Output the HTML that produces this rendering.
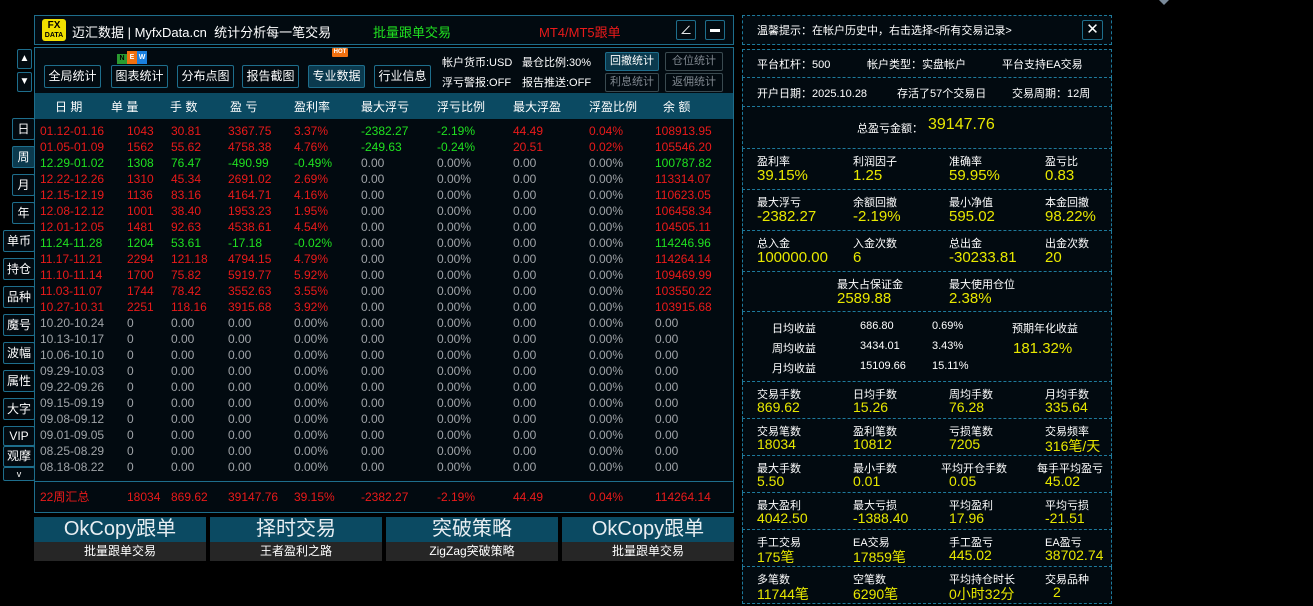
<!DOCTYPE html>
<html><head><meta charset="utf-8"><style>
*{margin:0;padding:0;box-sizing:border-box}
body{width:1313px;height:606px;background:#000;overflow:hidden;position:relative;font-family:"Liberation Sans","Noto Sans CJK SC",sans-serif;color:#fff;font-size:12px}
.a{position:absolute;white-space:nowrap}
.btn{position:absolute;border:1px solid #1e6e8c;border-radius:2px;background:#020a10;color:#fff;text-align:center;font-size:12px}
.r{color:#ea1a1a}.g{color:#20e020}.y{color:#e8e800}.gr{color:#a0a4a8}
.row{position:absolute;left:40px;height:16px;font-size:12px;line-height:16px;width:690px}
.row span{position:absolute;top:0}
.c1{left:0}.c2{left:87px}.c3{left:131px}.c4{left:188px}.c5{left:254px}.c6{left:321px}.c7{left:397px}.c8{left:473px}.c9{left:549px}.c10{left:615px}
.sec{position:absolute;left:742px;width:370px;border-left:1px dashed #1e7a9c;border-right:1px dashed #1e7a9c;border-bottom:1px dashed #1e7a9c;background:#020a10}
.lb{position:absolute;font-size:11px;color:#fff;white-space:nowrap}
.vl{position:absolute;font-size:15px;color:#e8e800;white-space:nowrap}
</style></head><body>
<div class="a" style="left:1159px;top:0;width:0;height:0;border-left:5px solid transparent;border-right:5px solid transparent;border-top:5px solid #7a8a9a"></div>

<!-- main panel -->
<div class="a" style="left:34px;top:15px;width:700px;height:30px;border:1px solid #1e6e8c;background:#020a10"></div>
<div class="a" style="left:42px;top:19px;width:24px;height:22px;background:#f0e000;border-radius:3px;color:#000;font-weight:bold;text-align:center;font-size:10px;line-height:9px;padding-top:2px">FX<br><span style="font-size:7px">DATA</span></div>
<div class="a" style="left:72px;top:22px;font-size:13px">迈汇数据 | MyfxData.cn &nbsp;统计分析每一笔交易</div>
<div class="a g" style="left:373px;top:22px;font-size:13px">批量跟单交易</div>
<div class="a r" style="left:539px;top:22px;font-size:13px">MT4/MT5跟单</div>
<div class="btn" style="left:676px;top:20px;width:20px;height:20px;line-height:18px">∠</div>
<div class="btn" style="left:705px;top:20px;width:20px;height:20px"><div style="margin:8px auto 0;width:10px;height:3px;background:#fff"></div></div>

<div class="a" style="left:34px;top:47px;width:700px;height:466px;border:1px solid #1e6e8c;background:#020a10"></div>
<div class="btn" style="left:44px;top:65px;width:57px;height:23px;line-height:21px">全局统计</div>
<div class="btn" style="left:111px;top:65px;width:57px;height:23px;line-height:21px">图表统计</div>
<div class="btn" style="left:177px;top:65px;width:57px;height:23px;line-height:21px">分布点图</div>
<div class="btn" style="left:242px;top:65px;width:57px;height:23px;line-height:21px">报告截图</div>
<div class="btn" style="left:308px;top:65px;width:57px;height:23px;line-height:21px;background:#0b3a4e">专业数据</div>
<div class="btn" style="left:374px;top:65px;width:57px;height:23px;line-height:21px">行业信息</div>
<div class="a" style="left:117px;top:54px;width:10px;height:10px;background:#2a9a30;font-size:7px;text-align:center;line-height:10px;font-weight:bold;color:#000">N</div>
<div class="a" style="left:127px;top:51px;width:10px;height:13px;background:#f07010;font-size:7px;text-align:center;line-height:13px;font-weight:bold">E</div>
<div class="a" style="left:137px;top:51px;width:10px;height:13px;background:#1a80e0;font-size:7px;text-align:center;line-height:13px;font-weight:bold">W</div>
<div class="a" style="left:332px;top:48px;width:16px;height:9px;background:#f07010;font-size:6px;text-align:center;line-height:9px;font-weight:bold;border-radius:1px">HOT</div>
<div class="a" style="left:442px;top:54px;font-size:11px">帐户货币:USD</div>
<div class="a" style="left:522px;top:54px;font-size:11px">最仓比例:30%</div>
<div class="a" style="left:442px;top:74px;font-size:11px">浮亏警报:OFF</div>
<div class="a" style="left:522px;top:74px;font-size:11px">报告推送:OFF</div>
<div class="btn" style="left:605px;top:52px;width:54px;height:19px;line-height:17px;font-size:11px;background:#0b3a4e">回撤统计</div>
<div class="btn" style="left:665px;top:52px;width:58px;height:19px;line-height:17px;font-size:11px;color:#808890;border-color:#3a4a50">仓位统计</div>
<div class="btn" style="left:605px;top:73px;width:54px;height:19px;line-height:17px;font-size:11px;color:#808890;border-color:#3a4a50">利息统计</div>
<div class="btn" style="left:665px;top:73px;width:58px;height:19px;line-height:17px;font-size:11px;color:#808890;border-color:#3a4a50">返佣统计</div>

<div class="a" style="left:35px;top:93px;width:698px;height:26px;background:#0b4a62"></div>
<div class="a" style="left:55px;top:98px;font-size:12px">日 期</div>
<div class="a" style="left:111px;top:98px">单 量</div>
<div class="a" style="left:170px;top:98px">手 数</div>
<div class="a" style="left:230px;top:98px">盈 亏</div>
<div class="a" style="left:294px;top:98px">盈利率</div>
<div class="a" style="left:361px;top:98px">最大浮亏</div>
<div class="a" style="left:437px;top:98px">浮亏比例</div>
<div class="a" style="left:513px;top:98px">最大浮盈</div>
<div class="a" style="left:589px;top:98px">浮盈比例</div>
<div class="a" style="left:663px;top:98px">余 额</div>

<div class="row r" style="top:123px"><span class="c1">01.12-01.16</span><span class="c2">1043</span><span class="c3">30.81</span><span class="c4">3367.75</span><span class="c5">3.37%</span><span class="c6 g">-2382.27</span><span class="c7 g">-2.19%</span><span class="c8">44.49</span><span class="c9">0.04%</span><span class="c10">108913.95</span></div>
<div class="row r" style="top:139px"><span class="c1">01.05-01.09</span><span class="c2">1562</span><span class="c3">55.62</span><span class="c4">4758.38</span><span class="c5">4.76%</span><span class="c6 g">-249.63</span><span class="c7 g">-0.24%</span><span class="c8">20.51</span><span class="c9">0.02%</span><span class="c10">105546.20</span></div>
<div class="row g" style="top:155px"><span class="c1">12.29-01.02</span><span class="c2">1308</span><span class="c3">76.47</span><span class="c4">-490.99</span><span class="c5">-0.49%</span><span class="c6 gr">0.00</span><span class="c7 gr">0.00%</span><span class="c8 gr">0.00</span><span class="c9 gr">0.00%</span><span class="c10">100787.82</span></div>
<div class="row r" style="top:171px"><span class="c1">12.22-12.26</span><span class="c2">1310</span><span class="c3">45.34</span><span class="c4">2691.02</span><span class="c5">2.69%</span><span class="c6 gr">0.00</span><span class="c7 gr">0.00%</span><span class="c8 gr">0.00</span><span class="c9 gr">0.00%</span><span class="c10">113314.07</span></div>
<div class="row r" style="top:187px"><span class="c1">12.15-12.19</span><span class="c2">1136</span><span class="c3">83.16</span><span class="c4">4164.71</span><span class="c5">4.16%</span><span class="c6 gr">0.00</span><span class="c7 gr">0.00%</span><span class="c8 gr">0.00</span><span class="c9 gr">0.00%</span><span class="c10">110623.05</span></div>
<div class="row r" style="top:203px"><span class="c1">12.08-12.12</span><span class="c2">1001</span><span class="c3">38.40</span><span class="c4">1953.23</span><span class="c5">1.95%</span><span class="c6 gr">0.00</span><span class="c7 gr">0.00%</span><span class="c8 gr">0.00</span><span class="c9 gr">0.00%</span><span class="c10">106458.34</span></div>
<div class="row r" style="top:219px"><span class="c1">12.01-12.05</span><span class="c2">1481</span><span class="c3">92.63</span><span class="c4">4538.61</span><span class="c5">4.54%</span><span class="c6 gr">0.00</span><span class="c7 gr">0.00%</span><span class="c8 gr">0.00</span><span class="c9 gr">0.00%</span><span class="c10">104505.11</span></div>
<div class="row g" style="top:235px"><span class="c1">11.24-11.28</span><span class="c2">1204</span><span class="c3">53.61</span><span class="c4">-17.18</span><span class="c5">-0.02%</span><span class="c6 gr">0.00</span><span class="c7 gr">0.00%</span><span class="c8 gr">0.00</span><span class="c9 gr">0.00%</span><span class="c10">114246.96</span></div>
<div class="row r" style="top:251px"><span class="c1">11.17-11.21</span><span class="c2">2294</span><span class="c3">121.18</span><span class="c4">4794.15</span><span class="c5">4.79%</span><span class="c6 gr">0.00</span><span class="c7 gr">0.00%</span><span class="c8 gr">0.00</span><span class="c9 gr">0.00%</span><span class="c10">114264.14</span></div>
<div class="row r" style="top:267px"><span class="c1">11.10-11.14</span><span class="c2">1700</span><span class="c3">75.82</span><span class="c4">5919.77</span><span class="c5">5.92%</span><span class="c6 gr">0.00</span><span class="c7 gr">0.00%</span><span class="c8 gr">0.00</span><span class="c9 gr">0.00%</span><span class="c10">109469.99</span></div>
<div class="row r" style="top:283px"><span class="c1">11.03-11.07</span><span class="c2">1744</span><span class="c3">78.42</span><span class="c4">3552.63</span><span class="c5">3.55%</span><span class="c6 gr">0.00</span><span class="c7 gr">0.00%</span><span class="c8 gr">0.00</span><span class="c9 gr">0.00%</span><span class="c10">103550.22</span></div>
<div class="row r" style="top:299px"><span class="c1">10.27-10.31</span><span class="c2">2251</span><span class="c3">118.16</span><span class="c4">3915.68</span><span class="c5">3.92%</span><span class="c6 gr">0.00</span><span class="c7 gr">0.00%</span><span class="c8 gr">0.00</span><span class="c9 gr">0.00%</span><span class="c10">103915.68</span></div>
<div class="row gr" style="top:315px"><span class="c1">10.20-10.24</span><span class="c2">0</span><span class="c3">0.00</span><span class="c4">0.00</span><span class="c5">0.00%</span><span class="c6">0.00</span><span class="c7">0.00%</span><span class="c8">0.00</span><span class="c9">0.00%</span><span class="c10">0.00</span></div>
<div class="row gr" style="top:331px"><span class="c1">10.13-10.17</span><span class="c2">0</span><span class="c3">0.00</span><span class="c4">0.00</span><span class="c5">0.00%</span><span class="c6">0.00</span><span class="c7">0.00%</span><span class="c8">0.00</span><span class="c9">0.00%</span><span class="c10">0.00</span></div>
<div class="row gr" style="top:347px"><span class="c1">10.06-10.10</span><span class="c2">0</span><span class="c3">0.00</span><span class="c4">0.00</span><span class="c5">0.00%</span><span class="c6">0.00</span><span class="c7">0.00%</span><span class="c8">0.00</span><span class="c9">0.00%</span><span class="c10">0.00</span></div>
<div class="row gr" style="top:363px"><span class="c1">09.29-10.03</span><span class="c2">0</span><span class="c3">0.00</span><span class="c4">0.00</span><span class="c5">0.00%</span><span class="c6">0.00</span><span class="c7">0.00%</span><span class="c8">0.00</span><span class="c9">0.00%</span><span class="c10">0.00</span></div>
<div class="row gr" style="top:379px"><span class="c1">09.22-09.26</span><span class="c2">0</span><span class="c3">0.00</span><span class="c4">0.00</span><span class="c5">0.00%</span><span class="c6">0.00</span><span class="c7">0.00%</span><span class="c8">0.00</span><span class="c9">0.00%</span><span class="c10">0.00</span></div>
<div class="row gr" style="top:395px"><span class="c1">09.15-09.19</span><span class="c2">0</span><span class="c3">0.00</span><span class="c4">0.00</span><span class="c5">0.00%</span><span class="c6">0.00</span><span class="c7">0.00%</span><span class="c8">0.00</span><span class="c9">0.00%</span><span class="c10">0.00</span></div>
<div class="row gr" style="top:411px"><span class="c1">09.08-09.12</span><span class="c2">0</span><span class="c3">0.00</span><span class="c4">0.00</span><span class="c5">0.00%</span><span class="c6">0.00</span><span class="c7">0.00%</span><span class="c8">0.00</span><span class="c9">0.00%</span><span class="c10">0.00</span></div>
<div class="row gr" style="top:427px"><span class="c1">09.01-09.05</span><span class="c2">0</span><span class="c3">0.00</span><span class="c4">0.00</span><span class="c5">0.00%</span><span class="c6">0.00</span><span class="c7">0.00%</span><span class="c8">0.00</span><span class="c9">0.00%</span><span class="c10">0.00</span></div>
<div class="row gr" style="top:443px"><span class="c1">08.25-08.29</span><span class="c2">0</span><span class="c3">0.00</span><span class="c4">0.00</span><span class="c5">0.00%</span><span class="c6">0.00</span><span class="c7">0.00%</span><span class="c8">0.00</span><span class="c9">0.00%</span><span class="c10">0.00</span></div>
<div class="row gr" style="top:459px"><span class="c1">08.18-08.22</span><span class="c2">0</span><span class="c3">0.00</span><span class="c4">0.00</span><span class="c5">0.00%</span><span class="c6">0.00</span><span class="c7">0.00%</span><span class="c8">0.00</span><span class="c9">0.00%</span><span class="c10">0.00</span></div>
<div class="a" style="left:35px;top:481px;width:698px;height:1px;background:#1e6e8c"></div>
<div class="row r" style="top:489px"><span class="c1">22周汇总</span><span class="c2">18034</span><span class="c3">869.62</span><span class="c4">39147.76</span><span class="c5">39.15%</span><span class="c6">-2382.27</span><span class="c7">-2.19%</span><span class="c8">44.49</span><span class="c9">0.04%</span><span class="c10">114264.14</span></div>

<!-- bottom banners -->
<div class="a" style="left:34px;top:517px;width:172px;height:25px;background:#0b4a62;font-size:20px;text-align:center;line-height:25px;color:#e8eef2">OkCopy跟单</div>
<div class="a" style="left:34px;top:542px;width:172px;height:19px;background:#262626;text-align:center;line-height:19px">批量跟单交易</div>
<div class="a" style="left:210px;top:517px;width:172px;height:25px;background:#0b4a62;font-size:20px;text-align:center;line-height:25px;color:#e8eef2">择时交易</div>
<div class="a" style="left:210px;top:542px;width:172px;height:19px;background:#262626;text-align:center;line-height:19px">王者盈利之路</div>
<div class="a" style="left:386px;top:517px;width:172px;height:25px;background:#0b4a62;font-size:20px;text-align:center;line-height:25px;color:#e8eef2">突破策略</div>
<div class="a" style="left:386px;top:542px;width:172px;height:19px;background:#262626;text-align:center;line-height:19px">ZigZag突破策略</div>
<div class="a" style="left:562px;top:517px;width:172px;height:25px;background:#0b4a62;font-size:20px;text-align:center;line-height:25px;color:#e8eef2">OkCopy跟单</div>
<div class="a" style="left:562px;top:542px;width:172px;height:19px;background:#262626;text-align:center;line-height:19px">批量跟单交易</div>

<!-- left sidebar -->
<div class="btn" style="left:17px;top:49px;width:15px;height:20px;line-height:18px;font-size:10px">▲</div>
<div class="btn" style="left:17px;top:72px;width:15px;height:20px;line-height:18px;font-size:10px">▼</div>
<div class="btn" style="left:12px;top:118px;width:23px;height:22px;line-height:20px">日</div>
<div class="btn" style="left:12px;top:146px;width:23px;height:22px;line-height:20px;background:#0b3a4e">周</div>
<div class="btn" style="left:12px;top:174px;width:23px;height:22px;line-height:20px">月</div>
<div class="btn" style="left:12px;top:202px;width:23px;height:22px;line-height:20px">年</div>
<div class="btn" style="left:3px;top:230px;width:32px;height:22px;line-height:20px">单币</div>
<div class="btn" style="left:3px;top:258px;width:32px;height:22px;line-height:20px">持仓</div>
<div class="btn" style="left:3px;top:286px;width:32px;height:22px;line-height:20px">品种</div>
<div class="btn" style="left:3px;top:314px;width:32px;height:22px;line-height:20px">魔号</div>
<div class="btn" style="left:3px;top:342px;width:32px;height:22px;line-height:20px">波幅</div>
<div class="btn" style="left:3px;top:370px;width:32px;height:22px;line-height:20px">属性</div>
<div class="btn" style="left:3px;top:398px;width:32px;height:22px;line-height:20px">大字</div>
<div class="btn" style="left:3px;top:426px;width:32px;height:20px;line-height:18px">VIP</div>
<div class="btn" style="left:3px;top:446px;width:32px;height:21px;line-height:19px">观摩</div>
<div class="btn" style="left:3px;top:467px;width:32px;height:14px;line-height:12px;font-size:9px">v</div>

<!-- right panel -->
<div class="sec" style="top:15px;height:30px;border-top:1px dashed #1e7a9c"></div>
<div class="a" style="left:757px;top:22px;font-size:11px">温馨提示：在帐户历史中，右击选择&lt;所有交易记录&gt;</div>
<div class="btn" style="left:1082px;top:20px;width:21px;height:20px;line-height:18px;font-size:15px">✕</div>
<div class="sec" style="top:49px;height:29px;border-top:1px dashed #1e7a9c"></div>
<div class="lb" style="left:757px;top:56px">平台杠杆：500</div>
<div class="lb" style="left:867px;top:56px">帐户类型：实盘帐户</div>
<div class="lb" style="left:1002px;top:56px">平台支持EA交易</div>
<div class="sec" style="top:78px;height:29px"></div>
<div class="lb" style="left:757px;top:85px">开户日期：2025.10.28</div>
<div class="lb" style="left:897px;top:85px">存活了57个交易日</div>
<div class="lb" style="left:1012px;top:85px">交易周期：12周</div>
<div class="sec" style="top:107px;height:42px"></div>
<div class="lb" style="left:857px;top:120px">总盈亏金额：</div>
<div class="vl" style="left:928px;top:116px;font-size:16px">39147.76</div>

<div class="sec" style="top:149px;height:41px"></div>
<div class="lb" style="left:757px;top:153px">盈利率</div><div class="vl" style="left:757px;top:167px">39.15%</div>
<div class="lb" style="left:853px;top:153px">利润因子</div><div class="vl" style="left:853px;top:167px">1.25</div>
<div class="lb" style="left:949px;top:153px">准确率</div><div class="vl" style="left:949px;top:167px">59.95%</div>
<div class="lb" style="left:1045px;top:153px">盈亏比</div><div class="vl" style="left:1045px;top:167px">0.83</div>
<div class="sec" style="top:190px;height:41px"></div>
<div class="lb" style="left:757px;top:194px">最大浮亏</div><div class="vl" style="left:757px;top:208px">-2382.27</div>
<div class="lb" style="left:853px;top:194px">余额回撤</div><div class="vl" style="left:853px;top:208px">-2.19%</div>
<div class="lb" style="left:949px;top:194px">最小净值</div><div class="vl" style="left:949px;top:208px">595.02</div>
<div class="lb" style="left:1045px;top:194px">本金回撤</div><div class="vl" style="left:1045px;top:208px">98.22%</div>
<div class="sec" style="top:231px;height:41px"></div>
<div class="lb" style="left:757px;top:235px">总入金</div><div class="vl" style="left:757px;top:249px">100000.00</div>
<div class="lb" style="left:853px;top:235px">入金次数</div><div class="vl" style="left:853px;top:249px">6</div>
<div class="lb" style="left:949px;top:235px">总出金</div><div class="vl" style="left:949px;top:249px">-30233.81</div>
<div class="lb" style="left:1045px;top:235px">出金次数</div><div class="vl" style="left:1045px;top:249px">20</div>
<div class="sec" style="top:272px;height:40px"></div>
<div class="lb" style="left:837px;top:276px">最大占保证金</div><div class="vl" style="left:837px;top:290px">2589.88</div>
<div class="lb" style="left:949px;top:276px">最大使用仓位</div><div class="vl" style="left:949px;top:290px">2.38%</div>
<div class="sec" style="top:312px;height:70px"></div>
<div class="lb" style="left:772px;top:320px">日均收益</div><div class="lb" style="left:860px;top:320px">686.80</div><div class="lb" style="left:932px;top:320px">0.69%</div>
<div class="lb" style="left:772px;top:340px">周均收益</div><div class="lb" style="left:860px;top:340px">3434.01</div><div class="lb" style="left:932px;top:340px">3.43%</div>
<div class="lb" style="left:772px;top:360px">月均收益</div><div class="lb" style="left:860px;top:360px">15109.66</div><div class="lb" style="left:932px;top:360px">15.11%</div>
<div class="lb" style="left:1012px;top:320px">预期年化收益</div><div class="vl" style="left:1013px;top:340px">181.32%</div>

<div class="sec" style="top:382px;height:37px"></div>
<div class="lb" style="left:757px;top:386px">交易手数</div><div class="vl" style="left:757px;top:399px;font-size:14px">869.62</div>
<div class="lb" style="left:853px;top:386px">日均手数</div><div class="vl" style="left:853px;top:399px;font-size:14px">15.26</div>
<div class="lb" style="left:949px;top:386px">周均手数</div><div class="vl" style="left:949px;top:399px;font-size:14px">76.28</div>
<div class="lb" style="left:1045px;top:386px">月均手数</div><div class="vl" style="left:1045px;top:399px;font-size:14px">335.64</div>
<div class="sec" style="top:419px;height:37px"></div>
<div class="lb" style="left:757px;top:423px">交易笔数</div><div class="vl" style="left:757px;top:436px;font-size:14px">18034</div>
<div class="lb" style="left:853px;top:423px">盈利笔数</div><div class="vl" style="left:853px;top:436px;font-size:14px">10812</div>
<div class="lb" style="left:949px;top:423px">亏损笔数</div><div class="vl" style="left:949px;top:436px;font-size:14px">7205</div>
<div class="lb" style="left:1045px;top:423px">交易频率</div><div class="vl" style="left:1045px;top:436px;font-size:14px">316笔/天</div>
<div class="sec" style="top:456px;height:37px"></div>
<div class="lb" style="left:757px;top:460px">最大手数</div><div class="vl" style="left:757px;top:473px;font-size:14px">5.50</div>
<div class="lb" style="left:853px;top:460px">最小手数</div><div class="vl" style="left:853px;top:473px;font-size:14px">0.01</div>
<div class="lb" style="left:941px;top:460px">平均开仓手数</div><div class="vl" style="left:949px;top:473px;font-size:14px">0.05</div>
<div class="lb" style="left:1037px;top:460px">每手平均盈亏</div><div class="vl" style="left:1045px;top:473px;font-size:14px">45.02</div>
<div class="sec" style="top:493px;height:37px"></div>
<div class="lb" style="left:757px;top:497px">最大盈利</div><div class="vl" style="left:757px;top:510px;font-size:14px">4042.50</div>
<div class="lb" style="left:853px;top:497px">最大亏损</div><div class="vl" style="left:853px;top:510px;font-size:14px">-1388.40</div>
<div class="lb" style="left:949px;top:497px">平均盈利</div><div class="vl" style="left:949px;top:510px;font-size:14px">17.96</div>
<div class="lb" style="left:1045px;top:497px">平均亏损</div><div class="vl" style="left:1045px;top:510px;font-size:14px">-21.51</div>
<div class="sec" style="top:530px;height:37px"></div>
<div class="lb" style="left:757px;top:534px">手工交易</div><div class="vl" style="left:757px;top:547px;font-size:14px">175笔</div>
<div class="lb" style="left:853px;top:534px">EA交易</div><div class="vl" style="left:853px;top:547px;font-size:14px">17859笔</div>
<div class="lb" style="left:949px;top:534px">手工盈亏</div><div class="vl" style="left:949px;top:547px;font-size:14px">445.02</div>
<div class="lb" style="left:1045px;top:534px">EA盈亏</div><div class="vl" style="left:1045px;top:547px;font-size:14px">38702.74</div>
<div class="sec" style="top:567px;height:37px"></div>
<div class="lb" style="left:757px;top:571px">多笔数</div><div class="vl" style="left:757px;top:584px;font-size:14px">11744笔</div>
<div class="lb" style="left:853px;top:571px">空笔数</div><div class="vl" style="left:853px;top:584px;font-size:14px">6290笔</div>
<div class="lb" style="left:949px;top:571px">平均持仓时长</div><div class="vl" style="left:949px;top:584px;font-size:14px">0小时32分</div>
<div class="lb" style="left:1045px;top:571px">交易品种</div><div class="vl" style="left:1053px;top:584px;font-size:14px">2</div>
</body></html>
